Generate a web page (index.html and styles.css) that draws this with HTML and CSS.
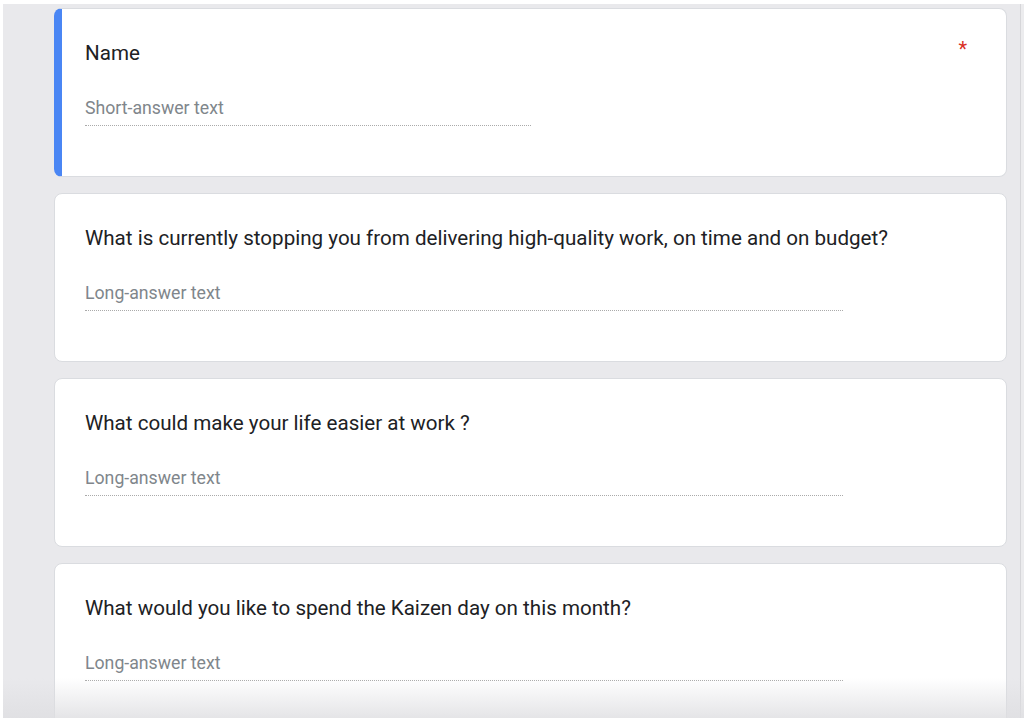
FILE: index.html
```html
<!DOCTYPE html>
<html lang="en">
<head>
<meta charset="utf-8">
<link rel="stylesheet" href="styles.css">
</head>
<body>
<div class="frame">
  <main class="form">
    <section class="card active">
      <div class="title-row">
        <h2 class="q">Name</h2>
        <span class="req">*</span>
      </div>
      <div class="answer short">Short-answer text</div>
    </section>
    <section class="card">
      <div class="title-row">
        <h2 class="q">What is currently stopping you from delivering high-quality work, on time and on budget?</h2>
      </div>
      <div class="answer long">Long-answer text</div>
    </section>
    <section class="card">
      <div class="title-row">
        <h2 class="q">What could make your life easier at work ?</h2>
      </div>
      <div class="answer long">Long-answer text</div>
    </section>
    <section class="card">
      <div class="title-row">
        <h2 class="q">What would you like to spend the Kaizen day on this month?</h2>
      </div>
      <div class="answer long">Long-answer text</div>
    </section>
  </main>
  <div class="scroll-edge"></div>
  <div class="fade"></div>
</div>
</body>
</html>
```
FILE: styles.css
```css
html, body {
  margin: 0;
  padding: 0;
  background: #ffffff;
  height: 720px;
  overflow: hidden;
}
.frame {
  position: relative;
  margin: 4px 0 0 3px;
  height: 714px;
  background: #e9e9ec;
  display: flex;
  overflow: hidden;
}
.form {
  flex: 1;
  padding: 4px 13px 0 51px;
  display: flex;
  flex-direction: column;
  gap: 16px;
}
.card {
  flex: 0 0 auto;
  height: 169px;
  box-sizing: border-box;
  background: #ffffff;
  border: 1px solid #dadce0;
  border-radius: 8px;
  padding: 30px 24px 0 30px;
}
.card.active {
  border-left: 8px solid #4a86f4;
  padding-left: 23px;
}
.title-row {
  display: flex;
  justify-content: space-between;
  align-items: flex-start;
}
.q {
  margin: 0;
  font-family: Roboto, "Liberation Sans", sans-serif;
  font-weight: 400;
  font-size: 20.6px;
  line-height: 28px;
  color: #202124;
}
.req {
  font-family: Roboto, "Liberation Sans", sans-serif;
  color: #d93025;
  font-size: 20px;
  line-height: 20px;
  margin-top: 0;
  margin-right: 15px;
}
.answer {
  margin-top: 30px;
  font-family: Roboto, "Liberation Sans", sans-serif;
  font-size: 17.7px;
  line-height: 22px;
  color: #80868b;
  padding-bottom: 6px;
  border-bottom: 1px dotted #aaaaaa;
}
.answer.short { width: 446px; }
.answer.long { width: 758px; }
.scroll-edge {
  width: 3px;
  flex: 0 0 3px;
  border-left: 1px solid #d6d6d9;
  background: #ececee;
}
.fade {
  position: absolute;
  left: 0;
  right: 0;
  bottom: 0;
  height: 40px;
  background: linear-gradient(to bottom, rgba(230,230,232,0), rgba(222,222,225,0.8));
  pointer-events: none;
}
```
